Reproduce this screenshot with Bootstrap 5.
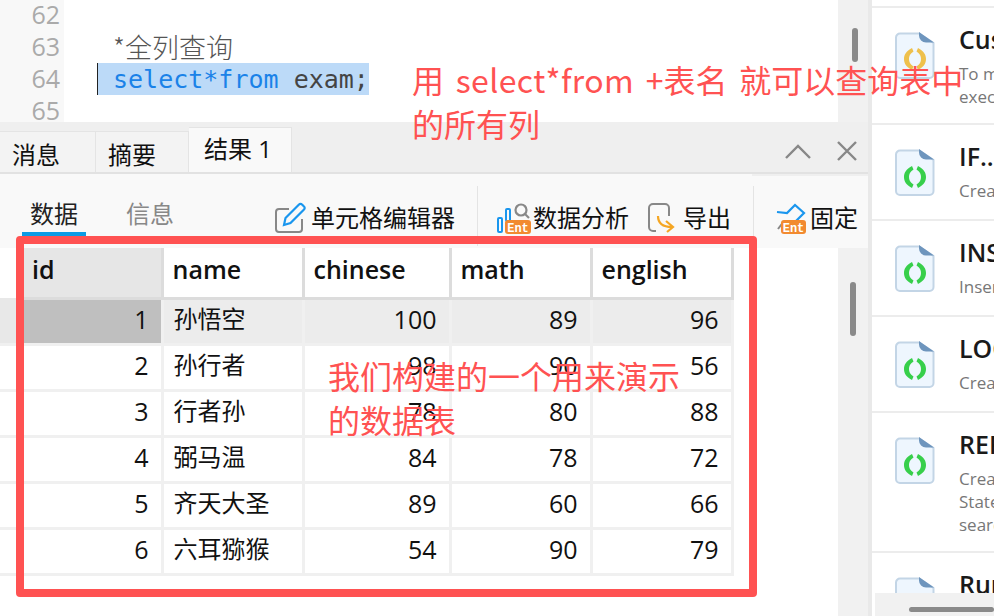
<!doctype html>
<html lang="zh"><head><meta charset="utf-8"><title>Navicat</title>
<link href="https://cdn.jsdelivr.net/npm/bootstrap@5.3.0/dist/css/bootstrap.min.css" rel="stylesheet">
<style>
html,body{height:616px;overflow:hidden}
body{font-family:"Open Sans","Noto Sans CJK SC",sans-serif;color:#111;background:#fff}
.stage{width:994px;height:616px;overflow:hidden}
.leftcol{width:868px;height:616px}
.divider{width:4px;background:#e9e9e9}
.side{width:122px;height:616px;overflow:hidden}
.editor{height:122px}
.gutter{width:64px;background:#f8f8f8;color:#aaa;font:25px/28px "Open Sans",sans-serif;text-align:right;padding:0 4px 0 0}
.gutter div{height:32px}
.code{flex:0 0 774px;padding-left:49px;overflow:hidden;font:25px/32px "DejaVu Sans Mono",monospace;color:#444}
.cmt{font-family:"Noto Sans CJK SC",sans-serif;font-weight:300;font-size:27px;line-height:30px;height:31px;color:#555}
.sel{display:inline-block;margin-left:-16px;padding-left:15px;background:#bcdaf8;border-left:1px solid #222;height:32px;line-height:34px}
.kw{color:#1a82e8}
.vbar{flex:1;background:#f1f1f1;position:relative}
.thumb{position:absolute;background:#8a8a8a;border-radius:3px}
.thumb1{left:14px;top:28px;width:6px;height:34px}
.tabbar{height:52px;background:#efefef;border-bottom:2px solid #e2e2e2}
.rtab{font-size:24px;line-height:1;height:41px;padding:11px 12px 0;background:#f3f3f3;border:1px solid #e4e4e4;border-bottom:0;border-left:0;color:#111}
.rtab1{width:96px}.rtab2{width:93px}
.rtab3{width:103px;height:45px;padding:9px 15px 0;background:#f9f9f9}
.winbtns{padding-right:10px;padding-bottom:11px;gap:24px}
.toolbar{height:74px;background:linear-gradient(#efefef,#efefef) no-repeat 752px 0/116px 2px,#f9f9f9;position:relative}
.stab{font-size:24px;line-height:1;padding:4px 8px 0;margin-left:22px;height:38px;margin-top:24px}
.stab.on{border-bottom:4px solid #0a9ce6;color:#222}
.stab.off{color:#888;margin-left:32px}
.tool{font-size:24px;line-height:1;color:#111;white-space:nowrap;margin-top:26px;height:36px}
.toolfirst{margin-left:93px}
.vsep{width:1px;height:60px;background:#e4e4e4;margin-top:12px;margin-left:22px}
.tool20{margin-left:19px}
.tool18{margin-left:18px}
.tool22{margin-left:21px;gap:3px}
.gridwrap{height:368px;position:relative;background:#fff}
.gridarea{width:838px}
table.dt{table-layout:fixed;width:732px;border-collapse:collapse;font-size:24px;margin:0}
table.dt td,table.dt th{border-right:3px solid #f0f0f0;border-bottom:3px solid #f0f0f0;height:46px;padding:0 12px 4px 10px;line-height:1;color:#111;overflow:hidden}
table.dt th{height:50px;font-size:25px;font-weight:600;border-right-color:#dcdcdc;border-bottom-color:#dcdcdc;padding:0 12px 6px 9px}
table.dt .gut{border-right:0;padding:0}
table.dt th.gut{border-bottom:0}
table.dt td.n{text-align:right;font-size:25px}
table.dt th.act{background:#e6e6e6;padding-left:8px}
table.dt tr.cur td{background:#ececec}
table.dt tr.cur td.act{background:#bfbfbf}
table.dt tr.cur td.gut{background:#e8e8e8}
.redbox{position:absolute;left:16px;top:236px;width:741px;height:361px;border:8px solid #ff5252;border-radius:4px;pointer-events:none}
.note{position:absolute;color:#ff5252;font-family:"Noto Sans CJK SC",sans-serif;font-size:32px;line-height:1;white-space:nowrap}
.note1{left:412px;top:63px;word-spacing:4.500px}
.lat{letter-spacing:.4px}
.note2{left:412px;top:107px}
.note3{left:328px;top:359px}
.note4{left:328px;top:403px}
.sitem{height:96px;border-bottom:2px solid #ececec;padding:16px 0 0 23px;display:flex;gap:24px;overflow:hidden}
.sitem svg{flex:none;margin-top:8px}
.stitle{font-size:25px;line-height:30px;font-weight:600;color:#1a1a1a;white-space:nowrap}
.sdesc{font-size:17px;line-height:23px;color:#777;white-space:nowrap;margin-top:8px}
.hbar{position:absolute;left:875px;top:593px;width:119px;height:23px;background:#f1f1f1}
.hthumb{position:absolute;left:34px;top:14px;width:85px;height:5px;background:#8a8a8a;border-radius:3px}
.topline{height:8px;border-bottom:2px solid #ececec}
</style></head><body>
<svg width="0" height="0" class="d-none"><defs>
<symbol id="doc" viewBox="0 0 40 48"><path d="M5 1.500h19L38.500 11v31a4 4 0 0 1-4 4H5a4 4 0 0 1-4-4V5.500a4 4 0 0 1 4-4z" fill="#eef6fe" stroke="#c3d5e6" stroke-width="2"/><path d="M24 0l15 10.500H31a7 7 0 0 1-7-7z" fill="#6e95bd"/></symbol>
<symbol id="brk" viewBox="0 0 24 24"><path d="M9 1C3 4 1 8 1 12s2 8 8 11l1.500-3.500C7 17 6 15 6 12s1-5 4.500-7.500zM15 1c6 3 8 7 8 11s-2 8-8 11l-1.500-3.500C17 17 18 15 18 12s-1-5-4.500-7.500z"/></symbol>
</defs></svg>
<div class="stage d-flex position-relative">
 <div class="leftcol d-flex flex-column">
  <div class="editor d-flex">
    <div class="gutter"><div>62</div><div>63</div><div>64</div><div>65</div></div>
    <div class="code">
      <div>&nbsp;</div><div class="cmt">*全列查询</div>
      <div><span class="sel"><span class="kw">select*from</span> exam;</span></div><div>&nbsp;</div>
    </div>
    <div class="vbar"><div class="thumb thumb1"></div></div>
  </div>
  <div class="tabbar d-flex align-items-end justify-content-between">
    <div class="d-flex align-items-end">
      <div class="rtab rtab1">消息</div><div class="rtab rtab2">摘要</div><div class="rtab rtab3">结果 1</div>
    </div>
    <div class="winbtns d-flex align-items-center">
      <svg width="28" height="16" viewBox="0 0 28 16" fill="none" stroke="#888" stroke-width="2.400"><path d="M2 15L14 3l12 12"/></svg>
      <svg width="22" height="20" viewBox="0 0 22 20" fill="none" stroke="#888" stroke-width="2.400"><path d="M2 1l18 18M20 1L2 19"/></svg>
    </div>
  </div>
  <div class="toolbar d-flex">
    <div class="stab on">数据</div><div class="stab off">信息</div>
    <div class="tool toolfirst d-flex align-items-center gap-1">
      <svg width="32" height="32" viewBox="0 0 32 32" fill="none"><path d="M14 7H4a3 3 0 0 0-3 3v17a3 3 0 0 0 3 3h20a3 3 0 0 0 3-3V17" stroke="#888" stroke-width="2"/><path d="M9 23l1.500-7L24 2.500a2 2 0 0 1 3 0l2 2a2 2 0 0 1 0 3L15.500 21z" stroke="#1a96ee" stroke-width="2.200"/></svg>单元格编辑器
    </div>
    <div class="vsep"></div>
    <div class="tool tool20 d-flex align-items-center position-relative">
      <svg width="36" height="34" viewBox="0 0 36 34"><g fill="none" stroke="#1a96ee" stroke-width="2"><rect x="1" y="17" width="4" height="14" rx="1"/><rect x="9" y="8" width="4" height="12" rx="1"/></g><circle cx="24" cy="9" r="5.500" fill="none" stroke="#888" stroke-width="2.200"/><path d="M28 13l4 4" stroke="#888" stroke-width="2.200"/><rect x="8" y="19" width="26" height="14" rx="3" fill="#f28a30"/><text x="21" y="30.500" text-anchor="middle" font-size="12" font-weight="700" fill="#fff" font-family="Liberation Mono,monospace">Ent</text></svg>数据分析
    </div>
    <div class="tool tool18 d-flex align-items-center gap-2">
      <svg width="28" height="32" viewBox="0 0 28 32" fill="none"><path d="M9 29H6a4 4 0 0 1-4-4V6a4 4 0 0 1 4-4h12a4 4 0 0 1 4 4v8" stroke="#888" stroke-width="2"/><path d="M11 14c0 8 5 11 14 11M19 19l7 6-6 5" stroke="#f5a623" stroke-width="2.200"/></svg>导出
    </div>
    <div class="vsep"></div>
    <div class="tool tool22 d-flex align-items-center position-relative">
      <svg width="32" height="34" viewBox="0 0 32 34"><path d="M2 11l10 1 8-8 9 8-8 8" fill="none" stroke="#1a96ee" stroke-width="2.200"/><path d="M9 20l-6 8" stroke="#888" stroke-width="2"/><rect x="6" y="19" width="25" height="14" rx="3" fill="#f28a30"/><text x="18.500" y="30.500" text-anchor="middle" font-size="12" font-weight="700" fill="#fff" font-family="Liberation Mono,monospace">Ent</text></svg>固定
    </div>
  </div>
  <div class="d-flex flex-grow-1">
   <div class="gridarea gridwrap">
    <table class="dt"><colgroup><col style="width:24px"><col style="width:138px"><col style="width:141px"><col style="width:147px"><col style="width:141px"><col style="width:141px"></colgroup>
     <thead><tr><th class="gut"></th><th class="act">id</th><th>name</th><th>chinese</th><th>math</th><th>english</th></tr></thead>
     <tbody>
      <tr class="cur"><td class="gut"></td><td class="n act">1</td><td>孙悟空</td><td class="n">100</td><td class="n">89</td><td class="n">96</td></tr>
      <tr><td class="gut"></td><td class="n">2</td><td>孙行者</td><td class="n">98</td><td class="n">90</td><td class="n">56</td></tr>
      <tr><td class="gut"></td><td class="n">3</td><td>行者孙</td><td class="n">78</td><td class="n">80</td><td class="n">88</td></tr>
      <tr><td class="gut"></td><td class="n">4</td><td>弼马温</td><td class="n">84</td><td class="n">78</td><td class="n">72</td></tr>
      <tr><td class="gut"></td><td class="n">5</td><td>齐天大圣</td><td class="n">89</td><td class="n">60</td><td class="n">66</td></tr>
      <tr><td class="gut"></td><td class="n">6</td><td>六耳猕猴</td><td class="n">54</td><td class="n">90</td><td class="n">79</td></tr>
     </tbody>
    </table>
   </div>
   <div class="vbar"><div class="thumb" style="left:12px;top:34px;width:6px;height:54px"></div></div>
  </div>
 </div>
 <div class="divider"></div>
 <div class="side">
  <div class="topline"></div>
  <div class="sitem" style="height:117px"><svg width="40" height="48"><use href="#doc"/><use href="#brk" x="8" y="15" width="24" height="24" fill="#eec04c"/></svg><div><div class="stitle">Custom</div><div class="sdesc">To make a<br>execute</div></div></div>
  <div class="sitem"><svg width="40" height="48"><use href="#doc"/><use href="#brk" x="8" y="16" width="24" height="24" fill="#37cf4b"/></svg><div><div class="stitle">IF...</div><div class="sdesc">Create</div></div></div>
  <div class="sitem"><svg width="40" height="48"><use href="#doc"/><use href="#brk" x="8" y="16" width="24" height="24" fill="#37cf4b"/></svg><div><div class="stitle">INSERT</div><div class="sdesc">Insert</div></div></div>
  <div class="sitem"><svg width="40" height="48"><use href="#doc"/><use href="#brk" x="8" y="16" width="24" height="24" fill="#37cf4b"/></svg><div><div class="stitle">LOOP</div><div class="sdesc">Create</div></div></div>
  <div class="sitem" style="height:140px"><svg width="40" height="48"><use href="#doc"/><use href="#brk" x="8" y="16" width="24" height="24" fill="#37cf4b"/></svg><div><div class="stitle">REPEAT</div><div class="sdesc">Create<br>Statement<br>search</div></div></div>
  <div class="sitem"><svg width="40" height="48"><use href="#doc"/></svg><div><div class="stitle">Run</div></div></div>
 </div>
 <div class="hbar"><div class="hthumb"></div></div>
 <div class="redbox"></div>
 <div class="note note1">用 <span class="lat">select*from</span> +表名 就可以查询表中</div>
 <div class="note note2">的所有列</div>
 <div class="note note3">我们构建的一个用来演示</div>
 <div class="note note4">的数据表</div>
</div>
<script src="https://cdn.jsdelivr.net/npm/bootstrap@5.3.0/dist/js/bootstrap.bundle.min.js"></script>
</body></html>
